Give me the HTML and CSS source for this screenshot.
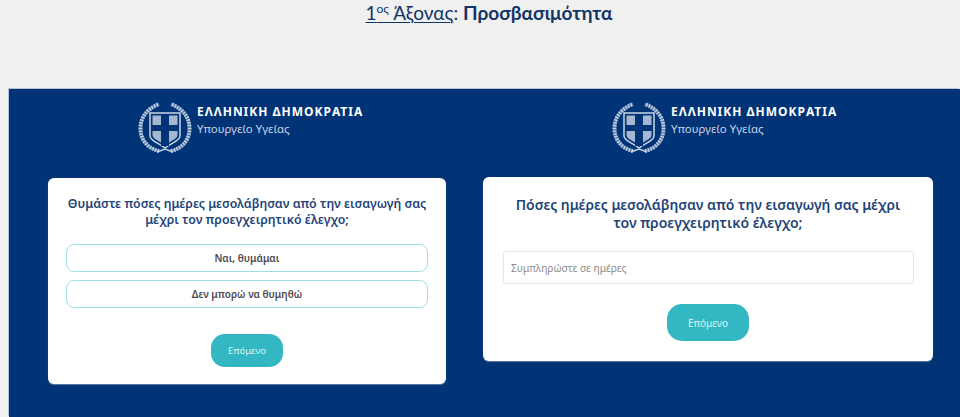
FILE: index.html
```html
<!DOCTYPE html>
<html lang="el">
<head>
    <meta charset="UTF-8">
    <meta name="viewport" content="width=device-width, initial-scale=1.0">
    <title>1ος Άξονας: Προσβασιμότητα</title>
    <link rel="stylesheet" href="styles.css">
</head>
<body>

    <svg class="defs" width="0" height="0" aria-hidden="true">
        <symbol id="emblem" viewBox="0 0 54 54">
            <g fill="none" stroke="#557aa8" stroke-width="3.800">
                <path d="M21 50 C8 47 2 37 2.500 26 C3 16 9 8 21 3"/>
                <path d="M33 50 C46 47 52 37 51.500 26 C51 16 45 8 33 3"/>
            </g>
            <g fill="none" stroke="#c3d0e2">
                <path d="M21 50 C8 47 2 37 2.500 26 C3 16 9 8 21 3" stroke-width="3.800" stroke-dasharray="1.500 1.300"/>
                <path d="M33 50 C46 47 52 37 51.500 26 C51 16 45 8 33 3" stroke-width="3.800" stroke-dasharray="1.500 1.300"/>
                <path d="M19 51 L27 48 L35 51" stroke-width="1.400"/>
            </g>
            <path d="M12 12 H42 V35 C42 40 33 42 27 47 C21 42 12 40 12 35 Z" fill="#003476" stroke="#c9d5e6" stroke-width="1.500"/>
            <path d="M14.500 14.500 H39.500 V34 C39.500 38 32 40 27 44.500 C22 40 14.500 38 14.500 34 Z" fill="#a5b8d2"/>
            <path d="M23 14 H31 V24 H41 V30 H31 V45 H23 V30 H13 V24 H23 Z" fill="#003476"/>
        </symbol>
    </svg>

    <h1 class="page-title"><span class="title-axis">1<sup>ος</sup> Άξονας</span>: <strong>Προσβασιμότητα</strong></h1>

    <main class="panel">
        <section class="pane pane-left">
            <div class="brand">
                <svg class="brand-emblem"><use href="#emblem"/></svg>
                <div class="brand-text">
                    <div class="brand-name">ΕΛΛΗΝΙΚΗ ΔΗΜΟΚΡΑΤΙΑ</div>
                    <div class="brand-sub">Υπουργείο Υγείας</div>
                </div>
            </div>
            <div class="card card-left">
                <h2 class="question">Θυμάστε πόσες ημέρες μεσολάβησαν από την εισαγωγή σας μέχρι τον προεγχειρητικό έλεγχο;</h2>
                <div class="options">
                    <button class="option" type="button">Ναι, θυμάμαι</button>
                    <button class="option" type="button">Δεν μπορώ να θυμηθώ</button>
                </div>
                <button class="next-btn" type="button">Επόμενο</button>
            </div>
        </section>

        <section class="pane pane-right">
            <div class="brand">
                <svg class="brand-emblem"><use href="#emblem"/></svg>
                <div class="brand-text">
                    <div class="brand-name">ΕΛΛΗΝΙΚΗ ΔΗΜΟΚΡΑΤΙΑ</div>
                    <div class="brand-sub">Υπουργείο Υγείας</div>
                </div>
            </div>
            <div class="card card-right">
                <h2 class="question">Πόσες ημέρες μεσολάβησαν από την εισαγωγή σας μέχρι τον προεγχειρητικό έλεγχο;</h2>
                <input class="days-input" type="text" placeholder="Συμπληρώστε σε ημέρες">
                <button class="next-btn" type="button">Επόμενο</button>
            </div>
        </section>
    </main>

</body>
</html>
```

FILE: styles.css
```css
:root {
    --navy: #003476;
    --title-navy: #123567;
    --teal: #33b8c3;
    --page-bg: #f0f0f0;
}

html, body {
    height: 100%;
}

body {
    margin: 0;
    background-color: var(--page-bg);
    font-family: "Noto Sans", "Open Sans", sans-serif;
    overflow: hidden;
    display: flex;
    flex-direction: column;
}

.defs {
    position: absolute;
}

.page-title {
    margin: 0;
    height: 89px;
    padding-top: 1px;
    box-sizing: border-box;
    padding-left: 18px;
    text-align: center;
    font-family: "Lato", "Open Sans", sans-serif;
    font-size: 19px;
    line-height: 24px;
    font-weight: 400;
    color: var(--title-navy);
}

.page-title strong {
    font-weight: 700;
}

.title-axis {
    text-decoration: underline;
    text-underline-offset: 2px;
    text-decoration-thickness: 1px;
}

.title-axis sup {
    font-size: 12px;
    line-height: 0;
}

.panel {
    flex: 1;
    margin-left: 9px;
    background-color: var(--navy);
    box-shadow: -1px -1px 0 #b9c3d3;
    display: flex;
}

.pane {
    box-sizing: border-box;
}

.pane-left {
    width: 455px;
}

.pane-right {
    width: 496px;
}

.brand {
    display: flex;
    align-items: flex-start;
    gap: 5px;
    height: 64px;
    margin-top: 12px;
    color: #fff;
}

.pane-left .brand {
    padding-left: 129px;
}

.pane-right .brand {
    padding-left: 148px;
}

.brand-emblem {
    width: 54px;
    height: 54px;
    flex: none;
    filter: blur(0.4px);
}

.brand-text {
    padding-top: 3px;
}

.brand-name {
    font-size: 12px;
    line-height: 16px;
    font-weight: 700;
    letter-spacing: 1px;
    white-space: nowrap;
}

.brand-sub {
    margin-top: 1px;
    font-size: 11.400px;
    line-height: 16px;
    color: #c9d5e6;
    white-space: nowrap;
}

.card {
    background-color: #fff;
    border-radius: 6px;
    box-sizing: border-box;
    text-align: center;
    box-shadow: 0 1px 1px rgba(190, 202, 220, 0.5);
}

.card-left {
    margin: 13px 0 0 39px;
    width: 398px;
    height: 206px;
    padding: 18px 18px 0;
}

.card-right {
    margin: 12px 0 0 19px;
    width: 450px;
    height: 184px;
    padding: 19px 20px 0;
}

.question {
    margin: 0;
    color: #1f4579;
    font-weight: 600;
}

.card-left .question {
    font-size: 12.350px;
    line-height: 16px;
}

.card-right .question {
    font-size: 14px;
    line-height: 18px;
}

.options {
    display: flex;
    flex-direction: column;
    gap: 8px;
    margin-top: 16px;
}

.option {
    height: 28px;
    padding: 0;
    background-color: #fff;
    border: 1px solid #9fe0e6;
    border-radius: 8px;
    font-family: inherit;
    font-size: 10px;
    font-weight: 600;
    color: #4a4a50;
}

.next-btn {
    display: block;
    margin: 0 auto;
    padding: 0;
    border: none;
    background-color: var(--teal);
    color: #d9f3f5;
    font-family: inherit;
    font-size: 10px;
}

.card-left .next-btn {
    margin-top: 26px;
    width: 72px;
    height: 33px;
    border-radius: 14px;
    font-size: 9.500px;
}

.card-right .next-btn {
    margin-top: 20px;
    width: 82px;
    height: 37px;
    border-radius: 15px;
}

.days-input {
    display: block;
    box-sizing: border-box;
    width: 411px;
    height: 33px;
    margin-top: 19px;
    padding: 0 7px;
    border: 1px solid #e6e6e6;
    border-radius: 3px;
    font-family: inherit;
    font-size: 10.200px;
}

.days-input::placeholder {
    color: #8c8c8c;
}
```
